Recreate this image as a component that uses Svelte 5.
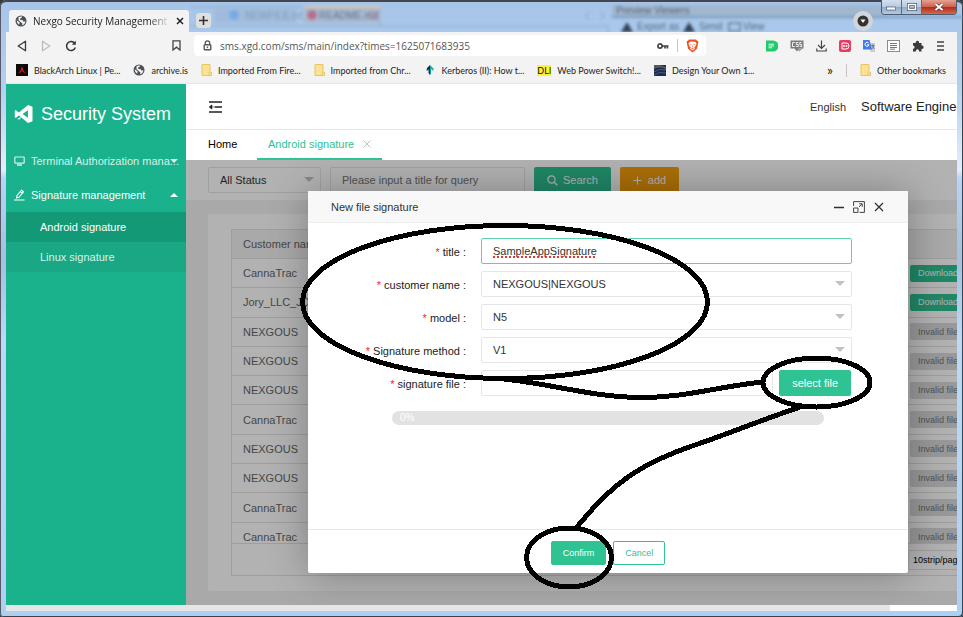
<script>
  const rows = [
    ['CannaTrac', true],
    ['Jory_LLC_JDX', true],
    ['NEXGOUS', false],
    ['NEXGOUS', false],
    ['NEXGOUS', false],
    ['CannaTrac', false],
    ['NEXGOUS', false],
    ['NEXGOUS', false],
    ['CannaTrac', false],
    ['CannaTrac', false]
  ];
  const selects = [
    { id: 'customer', label: 'customer name', value: 'NEXGOUS|NEXGOUS' },
    { id: 'model', label: 'model', value: 'N5' },
    { id: 'method', label: 'Signature method', value: 'V1' }
  ];
  let title = $state('SampleAppSignature');
  let query = $state('');
  let url = $state('sms.xgd.com/sms/main/index?times=1625071683935');
</script>

{#snippet globe()}
  <svg width="12" height="12" viewBox="0 0 12 12" aria-hidden="true">
    <circle cx="6" cy="6" r="5.5" fill="#4d5156" />
    <path d="M1.6 5.2 4.6 7.2 4.2 9.8Q1.8 8.6 1.6 5.2ZM3.6 2.2Q5 1.2 7 1.6L6.6 3 5 3.6 5.4 5 8 5.2 8.4 6.8 10.4 6.2Q10 9.6 7 10.3L7.4 8.4 5.6 7 3.4 5Z" fill="#f3f3f3" />
  </svg>
{/snippet}

{#snippet folder()}
  <svg width="11" height="12" viewBox="0 0 11 12" aria-hidden="true">
    <path d="M1 .5H9V8.5H10.5V11.5H1Z" fill="#fde293" stroke="#e5c565" />
    <path d="M8 8.5V11.5" stroke="#e5c565" />
  </svg>
{/snippet}

<div class="window">
  <div class="titlebar">
    <svg class="behind" viewBox="0 0 963 30" preserveAspectRatio="xMinYMin slice" aria-hidden="true">
      <defs>
        <filter id="soft" x="-10%" y="-40%" width="120%" height="180%"><feGaussianBlur stdDeviation="1.6" /></filter>
      </defs>
      <g filter="url(#soft)">
        <path d="M190 5H380M190 24H608V33M380 5V24" stroke="#8aa7c8" fill="none" />
        <rect x="214" y="7" width="82" height="14" fill="#a0bbdb" />
        <rect x="304" y="6" width="77" height="15" fill="#a9b9d0" />
        <rect x="304" y="4" width="77" height="2" fill="#d9c9a4" />
        <circle cx="234" cy="13" r="5" fill="#78abe6" />
        <circle cx="312" cy="13" r="5" fill="#b4708c" />
        <circle cx="372" cy="13" r="4" fill="none" stroke="#c07a9c" />
        <text x="245" y="17" fill="#8199b8">NEWFILE.txt</text>
        <text x="319" y="17" fill="#5c6c89">README.md</text>
        <path d="M590 10 585 14 590 18M600 10 605 14 600 18" stroke="#8aa5c6" fill="none" />
        <rect x="612" y="3" width="275" height="11" fill="#a0b7d0" />
        <path d="M612 15H963" stroke="#7f9aba" stroke-width="2" />
        <text x="616" y="12" fill="#46566c">Preview Viewers</text>
        <path d="M621 30 627 20 633 30ZM683 30 689 20 695 30Z" fill="#32435a" />
        <text x="637" y="28" fill="#56667d">Export as</text>
        <text x="699" y="28" fill="#56667d">Send</text>
        <rect x="729" y="21" width="11" height="8" fill="none" stroke="#46566c" />
        <text x="743" y="28" fill="#56667d">View</text>
      </g>
    </svg>
    <div class="tab">
      {@render globe()}
      <span class="tab-title">Nexgo Security Management System</span>
      <button class="plain" aria-label="Close tab">
        <svg width="8" height="8" viewBox="0 0 8 8"><path d="M1 1 7 7M7 1 1 7" stroke="#222" stroke-width="1.5" /></svg>
      </button>
    </div>
    <button class="new-tab" aria-label="New tab">
      <svg width="9" height="9" viewBox="0 0 9 9"><path d="M4.500 0V9M0 4.500H9" stroke="#333" stroke-width="1.600" /></svg>
    </button>
    <button class="tab-search" aria-label="Search tabs">
      <svg width="12" height="12" viewBox="0 0 12 12"><circle cx="6" cy="6" r="5.500" fill="#333" /><path d="M3.500 4.500H8.500L6 8Z" fill="#fff" /></svg>
    </button>
    <div class="controls">
      <button aria-label="Minimize"><svg width="11" height="8" viewBox="0 0 11 8"><rect x=".5" y="4" width="9" height="3" fill="#fff" stroke="#4b5a70" stroke-width=".7" /></svg></button>
      <button aria-label="Maximize"><svg width="10" height="8" viewBox="0 0 10 8"><rect x="1.500" y="1.500" width="7" height="5" fill="none" stroke="#4b5a70" stroke-width="3" /><rect x="1.500" y="1.500" width="7" height="5" fill="none" stroke="#fff" stroke-width="1.500" /></svg></button>
      <button class="close" aria-label="Close"><svg width="10" height="8" viewBox="0 0 10 8"><path d="M1.500 1 8.500 7M8.500 1 1.500 7" stroke="#57303a" stroke-width="3.200" /><path d="M1.500 1 8.500 7M8.500 1 1.500 7" stroke="#fff" stroke-width="1.900" /></svg></button>
    </div>
  </div>

  <div class="browser">
    <div class="toolbar">
      <div class="nav">
        <button class="plain" aria-label="Back"><svg width="10" height="12" viewBox="0 0 10 12"><path d="M8.500 1.200V10.800L1.200 6Z" fill="none" stroke="#3c3c3c" stroke-width="1.300" stroke-linejoin="round" /></svg></button>
        <button class="plain" aria-label="Forward"><svg width="10" height="12" viewBox="0 0 10 12"><path d="M1.500 1.200V10.800L8.800 6Z" fill="none" stroke="#bdbdbd" stroke-width="1.300" stroke-linejoin="round" /></svg></button>
        <button class="plain" aria-label="Reload"><svg width="12" height="12" viewBox="0 0 12 12"><path d="M9.700 3.300A4.500 4.500 0 1 0 10.300 7.500" fill="none" stroke="#333" stroke-width="1.500" /><path d="M10.800.8V4.800H6.800Z" fill="#333" /></svg></button>
        <button class="plain mark" aria-label="Bookmark this page"><svg width="9" height="11" viewBox="0 0 9 11"><path d="M1 .8H8V10L4.500 7.200 1 10Z" fill="none" stroke="#444" stroke-width="1.300" /></svg></button>
      </div>
      <div class="address">
        <svg width="9" height="11" viewBox="0 0 9 11" aria-hidden="true"><path d="M2.300 5V3A2.200 2.200 0 0 1 6.700 3V5" fill="none" stroke="#555" stroke-width="1.300" /><rect x="1.200" y="4.800" width="6.600" height="5" rx=".8" fill="none" stroke="#555" stroke-width="1.400" /><rect x="3.800" y="6.500" width="1.400" height="1.600" fill="#555" /></svg>
        <input aria-label="Address" bind:value={url} />
        <svg width="12" height="8" viewBox="0 0 12 8" aria-hidden="true"><circle cx="3" cy="4" r="2.100" fill="none" stroke="#444" stroke-width="1.700" /><path d="M5 4H11.500M8 4V6.500M10.400 4V6.500" fill="none" stroke="#444" stroke-width="1.700" /></svg>
        <span class="rule"></span>
        <svg width="13" height="14" viewBox="0 0 13 14" aria-label="Brave Shields" role="img"><path d="M3 .6H10L11 1.800 12.300 2 12 5 10.900 9.800 6.500 13.500 2.100 9.800 1 5 .7 2 2 1.800Z" fill="#f0501f" /><path d="M3.400 3 6.500 2.400 9.600 3 10.600 4.800 9 8 8 8.600 9 9.600 6.500 11.600 4 9.600 5 8.600 4 8 2.400 4.800Z" fill="#fff" /><path d="M3.600 5.200 5.700 5.600 5 6.400ZM9.400 5.200 7.300 5.600 8 6.400ZM6.500 6 6 8 6.500 8.500 7 8ZM5.200 9.400 6.500 10.200 7.800 9.400 6.500 9Z" fill="#f0501f" /></svg>
      </div>
      <div class="exts">
        <svg width="12" height="12" viewBox="0 0 12 12"><path d="M0 .5H7A5.500 5.500 0 0 1 7 11.500H0Z" fill="#1fcb6c" /><path d="M2.500 4.200H8M2.500 6H8M2.500 7.800H6" stroke="#fff" stroke-width=".9" /></svg>
        <svg width="14" height="12" viewBox="0 0 14 12"><path d="M.5.500H13.500V8.500H9.500L7 11.500 4.500 8.500H.5Z" fill="#7c7c7c" /><path d="M4.800 2.500H2.500V6.500H4.800M8.300 2.500H6.200V4.500H8.300V6.500H6M11.600 2.500H9.700V4.500H11.600V6.500H9.600" fill="none" stroke="#eee" /><path d="M8 8.500 9.500 10.500 12.500 7.500" stroke="#999" fill="none" stroke-width="1.400" /></svg>
        <svg width="11" height="12" viewBox="0 0 11 12"><path d="M5.500.5V8M2 5 5.500 8.500 9 5M.8 8.500V11H10.200V8.500" fill="none" stroke="#444" stroke-width="1.200" /></svg>
        <svg width="12" height="12" viewBox="0 0 12 12"><rect width="12" height="12" rx="2" fill="#ea3a63" /><path d="M3 3H7A3 3 0 0 1 7 9H3Z" fill="none" stroke="#fff" /><circle cx="5" cy="6" r="1" fill="#fff" /><circle cx="7.500" cy="6" r="1" fill="#fff" /></svg>
        <svg width="12" height="12" viewBox="0 0 12 12"><path d="M5 3H12V12H7.500Z" fill="#c9cdd2" /><path d="M0 0H6.500L9 9.500H0Z" fill="#3f7de8" /><path d="M5.600 3A2 2 0 1 0 6 4.800H4.200" fill="none" stroke="#fff" /><path d="M8.200 5.500H11.200M9.700 4.500V5.500Q10.200 8 11.400 9M10.800 5.500Q10 8 8.600 9" fill="none" stroke="#5a6b80" stroke-width=".8" /></svg>
        <svg width="13" height="12" viewBox="0 0 13 12"><rect x=".5" y=".5" width="12" height="11" fill="#fff" stroke="#8b8b8b" /><path d="M3 3.500H10M3 5.500H10M3 7.500H10M3 9.200H8" stroke="#666" stroke-width=".9" /></svg>
        <svg width="12" height="12" viewBox="0 0 12 12"><path d="M1 3H3.800A1.700 1.700 0 1 1 7 3H9.500V5.500A1.700 1.700 0 1 1 9.500 8.800V11.500H7A1.600 1.600 0 1 0 4 11.500H1V8.800A1.600 1.600 0 1 0 1 5.600Z" fill="#3b3b3b" /></svg>
        <svg width="9" height="12" viewBox="0 0 9 12"><path d="M1 2H8M1 6H8M1 10H8" stroke="#444" stroke-width="1.400" /></svg>
      </div>
    </div>

    <nav class="bookmarks" aria-label="Bookmarks">
      <a href="#b1"><svg width="12" height="12" viewBox="0 0 12 12"><rect width="12" height="12" fill="#0a0a0a" /><path d="M6 2 7.500 6.500 10 9.500 6.800 8 6 6 5.200 8 2 9.500 4.500 6.500Z" fill="#e01818" /></svg>BlackArch Linux | Pe...</a>
      <a href="#b2">{@render globe()}archive.is</a>
      <a href="#b3">{@render folder()}Imported From Fire...</a>
      <a href="#b4">{@render folder()}Imported from Chr...</a>
      <a href="#b5"><svg width="12" height="12" viewBox="0 0 12 12"><path d="M6 1V11L4.500 9V5.500L2.500 7 3 4Z" fill="#15304d" /><path d="M6 1 9.500 4.500V7L7 5V10L6 11Z" fill="#14a9a3" /></svg>Kerberos (II): How t...</a>
      <a href="#b6"><span class="dli">DLI</span>Web Power Switch!...</a>
      <a href="#b7"><svg width="12" height="12" viewBox="0 0 12 12"><rect y="1" width="12" height="11" fill="#1c2c4d" /><path d="M0 1H6L12 3V5Q6 2 0 5Z" fill="#56595f" /><path d="M0 8Q5 4 12 6M0 11Q5 7 12 9" stroke="#5f7299" fill="none" stroke-width=".7" /></svg>Design Your Own 1...</a>
      <span class="more">»</span>
      <span class="rule"></span>
      <a class="other" href="#b8">{@render folder()}Other bookmarks</a>
    </nav>

    <div class="viewport">
      <div class="page">
        <aside>
          <div class="brand">
            <svg width="20" height="20" viewBox="0 0 20 20" aria-hidden="true"><path d="M14 1 18.500 2.800V17.200L14 19 5 11.500 1.500 14 .8 13.200V6.800L1.500 6 5 8.500ZM14 6.200 8.500 10 14 13.800Z" fill="#fff" fill-rule="evenodd" /><path d="M1 9 4 10 1 13M3 15 8 12.500 5.500 15.500Z" fill="#fff" /></svg>
            <span>Security System</span>
          </div>
          <a class="item" href="#terminal">
            <svg width="11" height="10" viewBox="0 0 11 10" aria-hidden="true"><rect x=".8" y="1" width="9.400" height="6.200" rx=".6" fill="none" stroke="#d6f1ea" stroke-width="1.200" /><path d="M3 9H8" stroke="#d6f1ea" stroke-width="1.300" /></svg>
            <span class="label">Terminal Authorization mana...</span>
            <i class="caret down"></i>
          </a>
          <a class="item open" href="#signature">
            <svg width="11" height="12" viewBox="0 0 11 12" aria-hidden="true"><path d="M2.500 9 3 6.500 7.500 1.200 9.500 2.800 5 8.200ZM6.300 2.700 8.200 4.300M0 11H10.500" fill="none" stroke="#fff" stroke-width="1.100" /></svg>
            <span class="label">Signature management</span>
            <i class="caret up"></i>
          </a>
          <div class="sub">
            <a class="active" href="#android">Android signature</a>
            <a href="#linux">Linux signature</a>
          </div>
        </aside>

        <main>
          <header>
            <button class="plain" aria-label="Collapse menu"><svg width="13" height="12" viewBox="0 0 13 12"><path d="M0 1H13M5.500 6H13M0 11H13" stroke="#222" stroke-width="1.500" /><path d="M0 6 3 3.800V8.200ZM2 6H5" fill="#222" stroke="#222" stroke-width=".5" /></svg></button>
            <a class="lang" href="#lang">English</a>
            <a class="user" href="#user">Software Engineer</a>
          </header>
          <nav class="tabs" aria-label="Open pages">
            <a class="home" href="#home">Home</a>
            <a class="current" href="#android">Android signature
              <svg width="8" height="8" viewBox="0 0 8 8" aria-hidden="true"><path d="M.5.500 7.500 7.500M7.500.5.500 7.500" stroke="#bdbdbd" /></svg>
            </a>
          </nav>

          <div class="content">
            <div class="filter">
              <div class="drop status">
                <select aria-label="Status"><option>All Status</option></select>
              </div>
              <input class="query" aria-label="Title" placeholder="Please input a title for query" bind:value={query} />
              <button class="btn search"><svg width="11" height="11" viewBox="0 0 11 11" aria-hidden="true"><circle cx="4.500" cy="4.500" r="3.600" fill="none" stroke="#fff" stroke-width="1.200" /><path d="M7.200 7.200 10.300 10.300" stroke="#fff" stroke-width="1.300" /></svg>Search</button>
              <button class="btn add"><svg width="9" height="9" viewBox="0 0 9 9" aria-hidden="true"><path d="M4.500.5V8.500M.5 4.500H8.500" stroke="#fff" /></svg>add</button>
            </div>
            <div class="card">
              <div class="table-wrap">
                <table>
                  <thead>
                    <tr><th>Customer name</th><th class="act"></th></tr>
                  </thead>
                  <tbody>
                    {#each rows as [name, ready]}
                      <tr>
                        <td>{name}</td>
                        <td class="act"><button class="mini" class:ready>{ready ? 'Download' : 'Invalid file'}</button></td>
                      </tr>
                    {/each}
                  </tbody>
                </table>
              </div>
              <div class="pager">
                <select aria-label="Rows per page"><option>10strip/page</option></select>
              </div>
            </div>

            <div class="shade">
              <div class="modal" role="dialog" aria-labelledby="dlg-title">
                <div class="modal-head">
                  <span id="dlg-title">New file signature</span>
                  <button class="plain" aria-label="Minimize dialog"><svg width="10" height="10" viewBox="0 0 10 10"><path d="M0 5.500H10" stroke="#2e2d3c" stroke-width="1.500" /></svg></button>
                  <button class="plain" aria-label="Maximize dialog"><svg width="12" height="12" viewBox="0 0 12 12"><path d="M.6 5V.6H11.400V11.400H6.500M.6 7H5V11.400H.6ZM6 6 9 3M6.200 2.800H9.200V5.800" fill="none" stroke="#444" /></svg></button>
                  <button class="plain" aria-label="Close dialog"><svg width="10" height="10" viewBox="0 0 10 10"><path d="M1 1 9 9M9 1 1 9" stroke="#2e2d3c" stroke-width="1.200" /></svg></button>
                </div>
                <form onsubmit={(e) => e.preventDefault()}>
                  <div class="row">
                    <label for="title"><b>*</b> title :</label>
                    <div class="field">
                      <input id="title" class="focus" bind:value={title} />
                      <span class="squiggle" aria-hidden="true">{title}</span>
                    </div>
                  </div>
                  {#each selects as s}
                    <div class="row">
                      <label for={s.id}><b>*</b> {s.label} :</label>
                      <div class="field drop"><select id={s.id}><option>{s.value}</option></select></div>
                    </div>
                  {/each}
                  <div class="row">
                    <label for="file"><b>*</b> signature file :</label>
                    <div class="field file">
                      <input id="file" />
                      <button class="btn pick" type="button">select file</button>
                    </div>
                  </div>
                  <div class="progress" role="progressbar" aria-label="Upload" aria-valuenow="0">0%</div>
                </form>
                <div class="modal-foot">
                  <button class="confirm">Confirm</button>
                  <button class="cancel">Cancel</button>
                </div>
                <svg class="marks" viewBox="308 191 600 382" aria-hidden="true">
                  <ellipse cx="505" cy="302" rx="202.500" ry="76.500" />
                  <path d="M495 378C550 383 590 397 640 397.500C685 398 720 386 763 382" />
                  <ellipse cx="816.500" cy="382.500" rx="53.500" ry="24.500" />
                  <path d="M803 406C750 424 720 437 692 446C640 464 618 483 600 501C590 511 585 518 575 529" />
                  <ellipse cx="569" cy="557.500" rx="42.500" ry="29.500" />
                </svg>
              </div>
            </div>
          </div>
        </main>
      </div>
    </div>
    <div class="hscroll"><span></span></div>
  </div>
</div>

<style>
  :global(body) { margin: 0; background: #33363d; }
  .window {
    box-sizing: border-box;
    height: 100vh;
    min-height: 560px;
    display: flex;
    flex-direction: column;
    padding: 0 6px 6px;
    overflow: hidden;
    position: relative;
    border-radius: 6px 6px 4px 4px;
    background: linear-gradient(180deg, #a5c4e8 0, #b2d1f1 90px, #e4eefa 170px, #b4d6fa 178px, #a4bfdf 260px, #b9dafa 340px, #acd0f4 100%);
    box-shadow: inset 0 2px 0 #43464e, inset 1px 0 0 #565b66, inset -1px -1px 0 #3d4149;
    font-family: "Liberation Sans", Arial, sans-serif;
    font-size: 11px;
    color: #333;
  }
  button, input, select { font: inherit; margin: 0; }
  a { color: inherit; text-decoration: none; }
  svg { display: block; flex: none; }
  .plain { border: 0; background: none; padding: 0; display: flex; }
  .rule { width: 1px; height: 13px; background: #c4c4c4; }

  .titlebar { height: 32px; flex: none; display: flex; align-items: flex-end; padding-left: 3px; }
  .behind { position: absolute; left: 0; top: 2px; width: 100%; height: 30px; font-size: 10px; }
  .tab {
    position: relative;
    box-sizing: border-box;
    width: 180px;
    height: 22px;
    padding: 0 5px 0 6px;
    display: flex;
    align-items: center;
    gap: 6px;
    background: #f3f3f3;
    border-radius: 3px 3px 0 0;
    font: 10px "Open Sans", "Noto Sans", sans-serif;
    color: #222;
  }
  .tab-title {
    flex: 1;
    overflow: hidden;
    white-space: nowrap;
    mask-image: linear-gradient(90deg, #000 85%, transparent);
  }
  .new-tab {
    position: relative;
    width: 15px;
    height: 15px;
    margin: 0 0 4px 7px;
    padding: 0;
    border: 0;
    border-radius: 3px;
    background: #dfdfdd;
    display: grid;
    place-items: center;
  }
  .tab-search {
    position: relative;
    width: 20px;
    height: 20px;
    margin: 0 8px 1px auto;
    padding: 0;
    border: 0;
    border-radius: 50%;
    background: #d2d6da;
    display: grid;
    place-items: center;
  }
  .controls {
    position: relative;
    align-self: flex-start;
    display: flex;
    height: 15px;
    border: 1px solid #4d5b70;
    border-top: 0;
    border-radius: 0 0 4px 4px;
    overflow: hidden;
    box-sizing: border-box;
  }
  .controls button {
    width: 20px;
    border: 0;
    border-right: 1px solid #5d6c82;
    padding: 0;
    display: grid;
    place-items: center;
    background: linear-gradient(#d4e0ee, #b9cadf 48%, #94abc8 52%, #b3cae4);
  }
  .controls .close { width: 34px; border-right: 0; background: linear-gradient(#e5a193, #cf6350 48%, #b12c1a 52%, #d06a4c); }

  .browser { flex: 1; min-height: 0; display: flex; flex-direction: column; background: #f3f3f3; position: relative; }
  .toolbar { height: 27px; flex: none; display: flex; align-items: center; }
  .nav { width: 188px; flex: none; display: flex; align-items: center; gap: 14px; padding: 0 13px 0 11px; box-sizing: border-box; }
  .mark { margin-left: auto; }
  .address {
    flex: 0 1 512px;
    height: 21px;
    padding: 0 7px 0 9px;
    box-sizing: border-box;
    display: flex;
    align-items: center;
    gap: 8px;
    background: #fff;
    border-radius: 4px;
  }
  .address input {
    flex: 1;
    min-width: 0;
    border: 0;
    padding: 0;
    outline: 0;
    background: none;
    color: #555;
    font: 10px "Open Sans", "Noto Sans", sans-serif;
  }
  .exts { margin-left: auto; padding-right: 12px; display: flex; align-items: center; gap: 12px; }
  .bookmarks {
    height: 25px;
    flex: none;
    box-sizing: border-box;
    display: flex;
    align-items: center;
    gap: 13px;
    padding: 0 11px 2px 10px;
    font: 9px Lato, "Open Sans", sans-serif;
    color: #222;
    white-space: nowrap;
    border-bottom: 1px solid #e6e6e6;
  }
  .bookmarks a { display: flex; align-items: center; gap: 6px; }
  .dli { background: #fdf335; color: #111; line-height: 11px; }
  .more { margin-left: auto; font-size: 14px; line-height: 14px; }

  .viewport { flex: 1; min-height: 0; overflow: hidden; }
  .page { min-width: 1024px; height: 100%; display: flex; }
  .hscroll { height: 6px; flex: none; background: #fff; display: flex; }
  .hscroll span { width: 93%; background: #e6e6e6; }

  aside { width: 180px; flex: none; background: #1ab28c; color: #fff; }
  .brand { height: 60px; display: flex; align-items: center; gap: 7px; padding-left: 8px; font-size: 18px; white-space: nowrap; }
  .item { position: relative; height: 34px; display: flex; align-items: center; gap: 6px; padding: 0 8px; color: #d6f1ea; }
  .item.open { color: #fff; }
  .label { flex: 1; min-width: 0; white-space: nowrap; }
  .caret { position: absolute; right: 8px; top: 15px; border: 4px solid transparent; }
  .caret.down { border-top-color: #d6f1ea; border-bottom: 0; }
  .caret.up { border-bottom-color: #fff; border-top: 0; }
  .sub { background: #19a883; }
  .sub a { display: block; line-height: 30px; padding-left: 34px; color: #d6f1ea; }
  .sub .active { background: #149977; color: #fff; }

  main { flex: 1; min-width: 0; display: flex; flex-direction: column; background: #fff; }
  header { height: 46px; flex: none; box-sizing: border-box; display: flex; align-items: center; gap: 15px; padding: 0 62px 0 23px; border-bottom: 1px solid #e8e8e8; }
  .lang { margin-left: auto; }
  .user { font-size: 13px; color: #222; }
  .tabs { height: 30px; flex: none; display: flex; color: #000; padding-left: 22px; box-sizing: border-box; }
  .tabs a { display: flex; align-items: center; box-sizing: border-box; }
  .tabs .home { width: 49px; padding-bottom: 2px; }
  .tabs .current { gap: 9px; padding: 0 11px; color: #2fc292; border-bottom: 2px solid #2fc292; }

  .content { position: relative; flex: 1; min-height: 0; display: flex; flex-direction: column; background: #f2f2f2; }
  .filter { height: 40px; flex: none; box-sizing: border-box; padding: 7px 22px; display: flex; gap: 9px; background: #fff; }
  .drop { position: relative; }
  .drop::after {
    content: "";
    position: absolute;
    right: 7px;
    top: 10px;
    border: 5px solid transparent;
    border-top-color: #c2c2c2;
    border-bottom: 0;
    pointer-events: none;
  }
  .drop select, .query, .field input {
    appearance: none;
    box-sizing: border-box;
    width: 100%;
    height: 26px;
    padding: 0 11px;
    border: 1px solid #e6e6e6;
    border-radius: 2px;
    background: #fff;
    color: #333;
    outline: 0;
  }
  .status { width: 113px; }
  .filter .query { width: 195px; }
  .query::placeholder { color: #757575; }
  .btn { height: 26px; border: 0; border-radius: 2px; padding: 0 13px; color: #fff; background: #2fc292; display: flex; align-items: center; justify-content: center; gap: 5px; }
  .add { background: #f5a00c; gap: 6px; }

  .card { flex: 1; min-height: 0; margin: 14px 22px; padding: 15px 23px; box-sizing: border-box; display: flex; flex-direction: column; background: #fff; border-radius: 2px; }
  .table-wrap { flex: 1; min-height: 0; overflow: hidden; border: 1px solid #e2e2e2; }
  table { width: 100%; height: 322px; border-collapse: separate; border-spacing: 0; table-layout: fixed; color: #666; }
  th, td { padding: 0 11px; text-align: left; font-weight: 400; border-bottom: 1px solid #e2e2e2; white-space: nowrap; }
  thead tr, th { height: 28px; }
  tbody tr { height: 29px; }
  th { background: #f2f2f2; }
  .act { width: 74px; padding: 0; }
  .mini { height: 17px; border: 0; border-radius: 2px; padding: 0 8px; font-size: 9px; color: #777; background: #dcdcdc; display: block; }
  .mini.ready { background: #2fc292; color: #fff; }
  .pager { height: 32px; flex: none; box-sizing: border-box; display: flex; align-items: center; justify-content: flex-end; border: 1px solid #e2e2e2; border-top: 0; }
  .pager select { appearance: none; width: 76px; height: 20px; padding: 0 4px; border: 1px solid #e2e2e2; background: #fff; color: #000; font-size: 9px; }

  .shade { position: absolute; inset: 0; display: grid; place-items: center; padding-bottom: 1px; background: rgba(0, 0, 0, .3); overflow: hidden; }
  .modal { position: relative; width: 600px; height: 382px; display: flex; flex-direction: column; background: #fff; border-radius: 2px; box-shadow: 1px 1px 40px rgba(0, 0, 0, .3); }
  .modal-head { height: 32px; flex: none; box-sizing: border-box; display: flex; align-items: center; gap: 9px; padding: 0 24px 0 23px; background: #f8f8f8; border-bottom: 1px solid #eee; }
  .modal-head span { flex: 1; }
  form { flex: 1; padding: 15px 56px 0 0; display: flex; flex-direction: column; gap: 7px; }
  .row { display: flex; gap: 15px; }
  .row label { width: 158px; line-height: 28px; height: 26px; text-align: right; color: #222; white-space: nowrap; }
  .row b { color: #f22; font-weight: 400; }
  .field { flex: 1; position: relative; }
  .field .focus { border-color: #5fd0ae; }
  .squiggle {
    position: absolute;
    left: 12px;
    top: 6px;
    line-height: 14px;
    color: transparent;
    pointer-events: none;
    text-decoration: underline dotted #e33;
    text-decoration-thickness: 2px;
    text-decoration-skip-ink: none;
  }
  .file { display: flex; gap: 6px; }
  .file input { flex: 1; }
  .pick { margin-right: 1px; }
  .progress { height: 14px; width: 432px; box-sizing: border-box; margin: 8px 0 0 84px; padding-left: 8px; border-radius: 7px; background: #e2e2e2; color: #fff; font-size: 10px; line-height: 14px; }
  .modal-foot { height: 44px; flex: none; box-sizing: border-box; padding-top: 3px; border-top: 1px solid #e8e8e8; display: flex; align-items: center; justify-content: center; gap: 7px; }
  .modal-foot button { height: 24px; padding: 0 11px; font-size: 9px; border-radius: 2px; border: 1px solid #2fc292; }
  .confirm { background: #2fc292; color: #fff; }
  .cancel { background: #fff; color: #2fc292; }
  .marks { position: absolute; inset: 0; width: 100%; height: 100%; overflow: visible; pointer-events: none; fill: none; stroke: #000; stroke-width: 5; shape-rendering: crispEdges; }
</style>
